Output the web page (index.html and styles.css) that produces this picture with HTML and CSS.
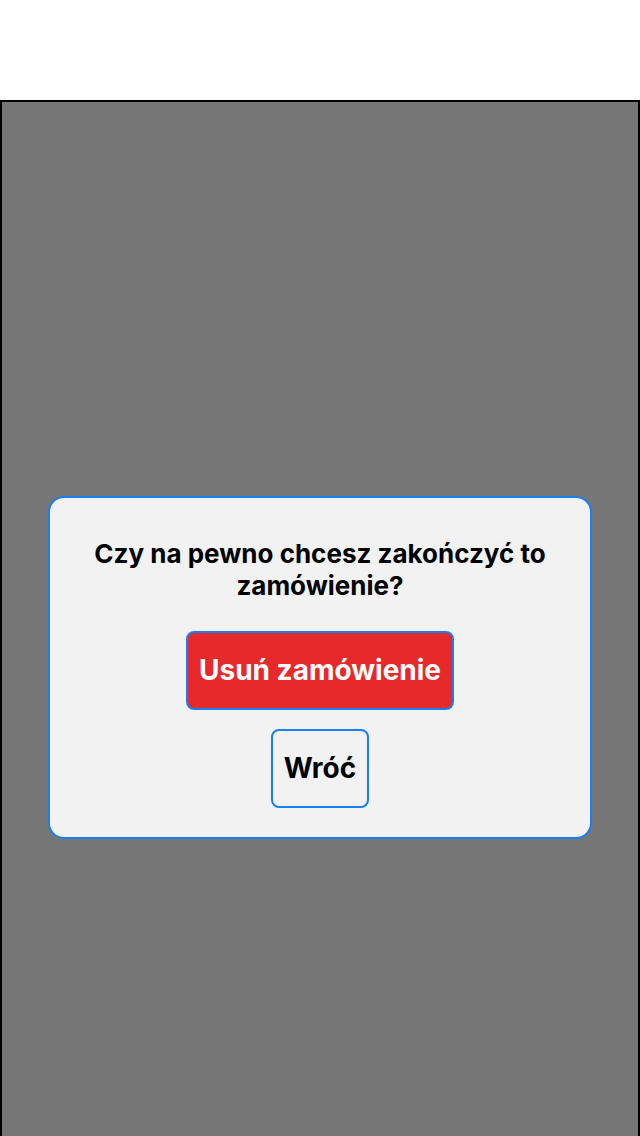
FILE: index.html
```html
<!DOCTYPE html>
<html lang="pl">
<head>
<meta charset="utf-8">
<link rel="stylesheet" href="styles.css">
</head>
<body>
<div class="top"></div>
<div class="frame">
  <div class="modal">
    <p class="title">Czy na pewno chcesz zakończyć to zamówienie?</p>
    <button class="btn btn-danger">Usuń zamówienie</button>
    <button class="btn btn-back">Wróć</button>
  </div>
</div>
</body>
</html>
```
FILE: styles.css
```css
html, body {
  margin: 0;
  padding: 0;
  height: 100%;
  background: #ffffff;
  font-family: Inter, "Liberation Sans", sans-serif;
}
body {
  display: flex;
  flex-direction: column;
}
.top {
  height: 100px;
  flex: none;
}
.frame {
  flex: 1;
  background: #767676;
  border: 2px solid #000;
  border-bottom: none;
  display: flex;
  flex-direction: column;
  align-items: center;
}
.modal {
  margin-top: 394px;
  width: 544px;
  box-sizing: border-box;
  background: #f2f2f2;
  border: 2px solid #1a7ff5;
  border-radius: 16px;
  padding: 40px 30px 29px;
  display: flex;
  flex-direction: column;
  align-items: center;
}
.title {
  margin: 0 0 29px;
  font-size: 26px;
  font-weight: 700;
  line-height: 32px;
  text-align: center;
  color: #000;
}
.btn {
  font-family: Inter, "Liberation Sans", sans-serif;
  font-weight: 700;
  font-size: 28px;
  line-height: 31px;
  border: 2px solid #1a7ff5;
  border-radius: 8px;
  padding: 22px 11px;
  cursor: pointer;
}
.btn-danger {
  background: #e6292b;
  color: #fff;
  margin-bottom: 19px;
}
.btn-back {
  background: #f2f2f2;
  color: #000;
}
```
